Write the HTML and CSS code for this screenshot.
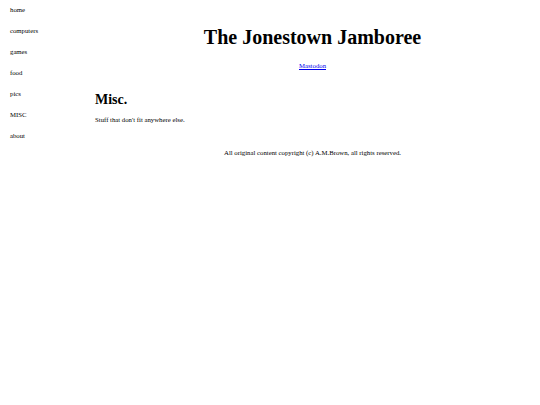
FILE: index.html
```html
<!DOCTYPE html>
<html>
<head>
<meta charset="utf-8">
<link rel="stylesheet" href="styles.css">
</head>
<body>
<div class="page">
  <nav class="nav">
    <a href="#">home</a>
    <a href="#">computers</a>
    <a href="#">games</a>
    <a href="#">food</a>
    <a href="#">pics</a>
    <a href="#">MISC</a>
    <a href="#">about</a>
  </nav>
  <main class="main">
    <h1 class="title">The Jonestown Jamboree</h1>
    <p class="social"><a href="#">Mastodon</a></p>
    <h2 class="section">Misc.</h2>
    <p class="text">Stuff that don't fit anywhere else.</p>
    <p class="footer">All original content copyright (c) A.M.Brown, all rights reserved.</p>
  </main>
</div>
</body>
</html>
```
FILE: styles.css
```css
html, body {
  margin: 0;
  padding: 0;
  background: #fff;
}
body {
  font-family: "Liberation Serif", "Times New Roman", serif;
  color: #000;
}
.page {
  display: flex;
  padding: 0 10px 0 10px;
}
.nav {
  width: 85px;
  display: flex;
  flex-direction: column;
  padding-top: 6px;
}
.nav a {
  font-size: 6.75px;
  line-height: 8px;
  height: 21px;
  color: #000;
  text-decoration: none;
}
.main {
  flex: 1;
  padding-top: 26px;
}
.title {
  margin: 0;
  font-size: 20px;
  line-height: 23px;
  text-align: center;
  font-weight: bold;
}
.social {
  margin: 13px 0 0 0;
  text-align: center;
  font-size: 6.75px;
  line-height: 8px;
}
.social a {
  color: #00e;
}
.section {
  margin: 22px 0 0 0;
  font-size: 14px;
  line-height: 16px;
  font-weight: bold;
}
.text {
  margin: 8px 0 0 0;
  font-size: 6.75px;
  line-height: 8px;
}
.footer {
  margin: 25px 0 0 0;
  text-align: center;
  font-size: 6.75px;
  line-height: 8px;
}
```
